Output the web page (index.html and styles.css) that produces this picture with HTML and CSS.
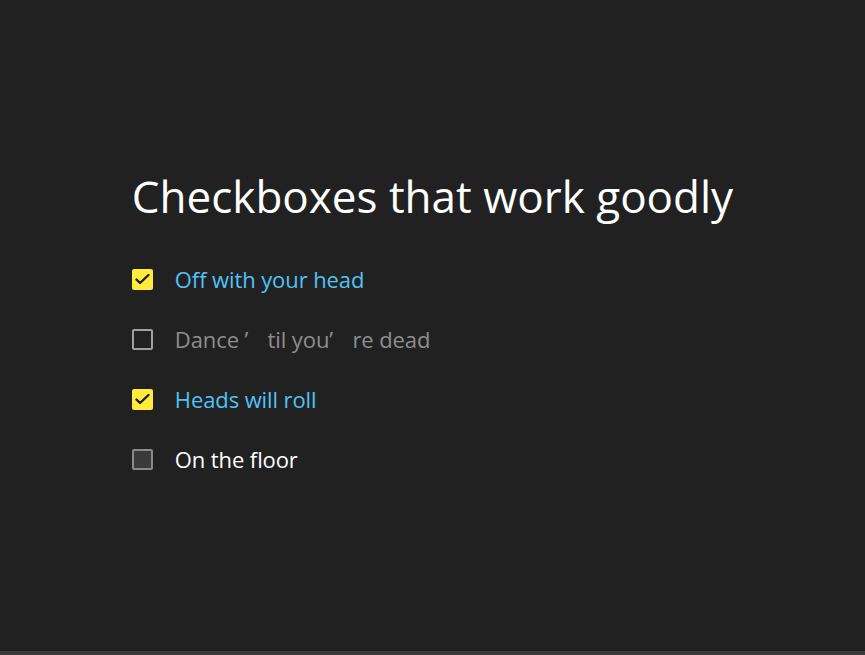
FILE: index.html
```html
<!DOCTYPE html>
<html>
<head>
    <title>Checkboxes</title>
    <meta charset="utf-8">
    <meta name="viewport" content="width=device-width, initial-scale=1">
    <link rel="stylesheet" href="styles.css">
</head>

<body>
    <div class="page">
        <div class="container">
            <h1>Checkboxes that work goodly</h1>
            <ul class="checklist">
                <li class="item checked">
                    <span class="box">
                        <svg viewBox="0 0 21 21" width="21" height="21"><path d="M4.5 10.5l3.5 3.5l8.5-8" fill="none" stroke="#1c1c1c" stroke-width="2.4" stroke-linecap="round" stroke-linejoin="round"/></svg>
                    </span>
                    <span class="text">Off with your head</span>
                </li>
                <li class="item disabled">
                    <span class="box"></span>
                    <span class="text">Dance <span class="quote">’</span>til you<span class="quote">’</span>re dead</span>
                </li>
                <li class="item checked">
                    <span class="box">
                        <svg viewBox="0 0 21 21" width="21" height="21"><path d="M4.5 10.5l3.5 3.5l8.5-8" fill="none" stroke="#1c1c1c" stroke-width="2.4" stroke-linecap="round" stroke-linejoin="round"/></svg>
                    </span>
                    <span class="text">Heads will roll</span>
                </li>
                <li class="item">
                    <span class="box"></span>
                    <span class="text">On the floor</span>
                </li>
            </ul>
        </div>
    </div>
    <div class="bottom-bar"></div>
</body>
</html>
```

FILE: styles.css
```css
html, body {
    margin: 0;
    height: 100%;
}

body {
    font-family: "Open Sans", "Noto Sans", sans-serif;
    background-color: #212121;
    color: #ffffff;
    display: flex;
    flex-direction: column;
}

.page {
    flex: 1;
    display: flex;
    align-items: center;
    justify-content: center;
}

.container {
    padding-top: 4px;
}

h1 {
    font-weight: 400;
    font-size: 44px;
    margin: 0 0 23px 0;
}

.checklist {
    list-style: none;
    margin: 0;
    padding: 0;
}

.item {
    display: flex;
    align-items: center;
    height: 60px;
    font-size: 22px;
    letter-spacing: -0.1px;
}

.box {
    width: 21px;
    height: 21px;
    box-sizing: border-box;
    border: 2px solid #8a8a8a;
    border-radius: 2px;
    background-color: #3a3a3a;
    margin-right: 22px;
    position: relative;
}

.box svg {
    position: absolute;
    top: -2px;
    left: -2px;
}

.item.checked .box {
    background-color: #ffeb3b;
    border-color: #ffeb3b;
}

.item.checked .text {
    color: #4fc3f7;
}

.item.disabled .box {
    background-color: transparent;
    border-color: #a0a0a0;
}

.item.disabled .text {
    color: #8e8e8e;
}

.quote {
    display: inline-block;
    width: 1.05em;
}

.bottom-bar {
    height: 4px;
    background-color: #3a3a3a;
}
```
